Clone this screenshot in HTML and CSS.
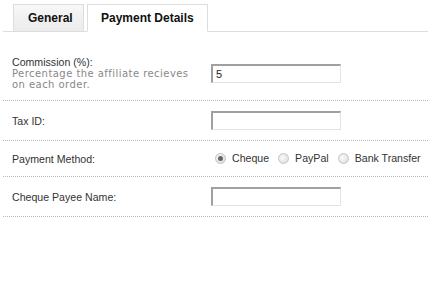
FILE: index.html
```html
<!DOCTYPE html>
<html lang="en">
<head>
  <meta charset="UTF-8" />
  <title>Affiliate - Payment Details</title>
  <link rel="stylesheet" href="styles.css">
</head>
<body>
  <!-- Tabs -->
  <div class="tabs">
    <a href="#" class="tab">General</a>
    <a href="#" class="tab tab-active">Payment Details</a>
  </div>

  <!-- Payment form -->
  <form class="form">
    <div class="row">
      <div class="label">
        Commission (%):
        <span class="help">Percentage the affiliate recieves on each order.</span>
      </div>
      <input type="text" class="field" value="5">
    </div>
    <div class="row">
      <div class="label">Tax ID:</div>
      <input type="text" class="field" value="">
    </div>
    <div class="row">
      <div class="label">Payment Method:</div>
      <div class="options">
        <label class="option"><input type="radio" name="payment" checked> Cheque</label>
        <label class="option"><input type="radio" name="payment"> PayPal</label>
        <label class="option"><input type="radio" name="payment"> Bank Transfer</label>
      </div>
    </div>
    <div class="row">
      <div class="label">Cheque Payee Name:</div>
      <input type="text" class="field" value="">
    </div>
  </form>
</body>
</html>
```

FILE: styles.css
```css
/* Reset */
* {
  margin: 0;
  padding: 0;
  box-sizing: border-box;
}
body {
  font-family: 'Liberation Sans', Arial, sans-serif;
  font-size: 10.6px;
  color: #333;
  background: #fff;
}

/* Tabs */
.tabs {
  display: flex;
  gap: 3px;
  padding: 4px 0 0 13px;
  margin-left: 3px;
  border-bottom: 1px solid #ddd;
}
.tab {
  display: block;
  height: 28px;
  margin-bottom: -1px;
  padding: 0 14px;
  line-height: 26px;
  font-size: 12px;
  font-weight: 700;
  color: #111;
  text-decoration: none;
  background: linear-gradient(#f7f7f7, #ebebeb);
  border: 1px solid #ddd;
}
.tab:first-child {
  margin-left: -3px;
  width: 71px;
  text-align: center;
}
.tab-active {
  background: #fff;
  border-bottom-color: #fff;
  padding: 0 13px;
}

/* Form rows */
.form {
  padding-top: 14px;
  margin-left: 3px;
}
.row {
  display: flex;
  align-items: center;
  padding: 10px 0;
  border-bottom: 1px dotted #b8b8b8;
}
.label {
  width: 208px;
  padding-left: 9px;
  line-height: 12px;
}
.help {
  display: block;
  width: 192px;
  font-family: 'DejaVu Sans', Verdana, sans-serif;
  font-size: 10px;
  line-height: 11px;
  letter-spacing: 0.45px;
  color: #888;
}

/* Inputs */
.field {
  width: 130px;
  height: 19px;
  padding: 0 3px;
  font-family: inherit;
  font-size: 11px;
  color: #222;
  border: 1px solid #e3e3e3;
  border-top: 2px solid #a0a0a0;
  border-left: 2px solid #a0a0a0;
  outline: none;
}

/* Radio options */
.options {
  display: flex;
  gap: 9px;
  padding-left: 4px;
  line-height: 15px;
}
.option {
  display: flex;
  align-items: center;
  gap: 6px;
}
.option input {
  appearance: none;
  width: 11px;
  height: 11px;
  border: 1px solid #c4c4c4;
  border-radius: 50%;
  background: radial-gradient(circle at 40% 40%, #fafafa, #d8d8d8);
  display: grid;
  place-content: center;
}
.option input:checked::before {
  content: "";
  width: 5px;
  height: 5px;
  border-radius: 50%;
  background: #666;
}
```
